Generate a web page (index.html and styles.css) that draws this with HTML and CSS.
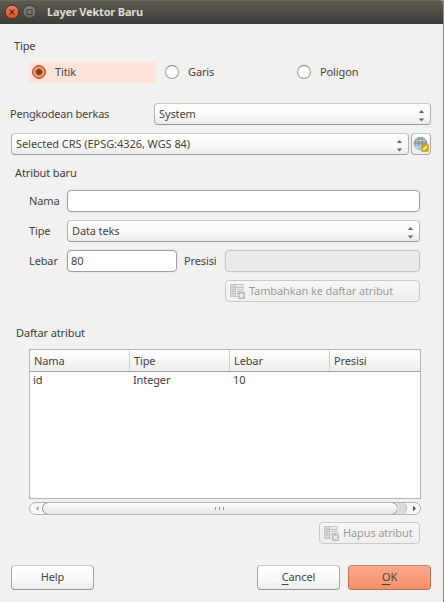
FILE: index.html
```html
<!DOCTYPE html>
<html lang="id">
<head>
<meta charset="utf-8">
<title>Layer Vektor Baru</title>
<link rel="stylesheet" href="styles.css">
</head>
<body>
<svg class="defs" aria-hidden="true">
  <symbol id="arrows" viewBox="0 0 7 13"><path d="M.8 4 3.500 1l2.700 3zM.8 9.400l2.700 3 2.700-3z" fill="#666"/></symbol>
  <symbol id="table" viewBox="0 0 15 15">
    <rect x=".5" y=".5" width="12.500" height="12" fill="#ececeb" stroke="#c6c6c5"/>
    <path d="M1 1h4v11H1z" fill="#d6d6d5"/>
    <path d="M5.500 1v11M1 3.500h12M2 5.500h2M2 7.500h2M2 9.500h2M7 5.500h5M7 7.500h5M7 9.500h3" stroke="#c2c2c1" fill="none"/>
    <rect x="8" y="8" width="7" height="7" rx="1" fill="#b9b9b8"/>
  </symbol>
</svg>
<div class="window">
  <header class="titlebar">
    <svg class="controls" viewBox="0 0 33 16" width="33" height="16">
      <defs>
        <linearGradient id="close" x2="0" y2="1"><stop stop-color="#f5825c"/><stop offset="1" stop-color="#df4a1c"/></linearGradient>
        <linearGradient id="max" x2="0" y2="1"><stop stop-color="#8a8880"/><stop offset="1" stop-color="#65635c"/></linearGradient>
      </defs>
      <circle cx="8" cy="8" r="6.800" fill="url(#close)" stroke="#35342f"/>
      <path d="m5.600 5.600 4.800 4.800m0-4.800-4.800 4.800" stroke="#47261b" stroke-width="1.200"/>
      <circle cx="25.500" cy="8" r="6.600" fill="url(#max)" stroke="#3a3934"/>
      <rect x="23" y="5.500" width="5" height="5" fill="none" stroke="#484640"/>
    </svg>
    <h1>Layer Vektor Baru</h1>
  </header>
  <main>
    <h2 class="type-title">Tipe</h2>
    <div class="radios">
      <label class="radio selected"><i class="dot"></i><span>Titik</span></label>
      <label class="radio"><i class="dot"></i><span>Garis</span></label>
      <label class="radio"><i class="dot"></i><span>Poligon</span></label>
    </div>
    <div class="row encoding">
      <span class="tight">Pengkodean berkas</span>
      <div class="combo"><span>System</span><svg class="arrows"><use href="#arrows"/></svg></div>
    </div>
    <div class="row crs">
      <div class="combo"><span class="wide">Selected CRS (EPSG:4326, WGS 84)</span><svg class="arrows"><use href="#arrows"/></svg></div>
      <button class="globe" aria-label="CRS">
        <svg viewBox="0 0 16 16" width="16" height="16">
          <circle cx="7.500" cy="7.800" r="6.800" fill="#96bce4"/>
          <path d="M.6 7.800a6.900 6.900 0 0 1 13.800 0z" fill="#8e9599"/>
          <path d="M1 7.800h13M2 4.500h11M2 11.500h11M7.500 1v13.500M4.500 2Q2.500 8 4.500 14M10.500 2q2 6 0 12" fill="none" stroke="#d5dde2" stroke-width=".6"/>
          <path d="M.6 7.800h13.800" stroke="#747c80" stroke-width=".8"/>
          <rect x="8.500" y="8.500" width="7" height="7" rx=".8" fill="#cfaa0c" stroke="#b8960c" stroke-width=".6"/>
          <path d="m10 14 .6-1.800 2.900-2.500.9.900-2.700 2.800z" fill="#fff"/>
        </svg>
      </button>
    </div>
    <h2 class="new-title">Atribut baru</h2>
    <div class="attribute">
      <span>Nama</span><div class="field name"></div>
      <span>Tipe</span><div class="combo"><span>Data teks</span><svg class="arrows"><use href="#arrows"/></svg></div>
      <span>Lebar</span>
      <div class="pair"><div class="field num">80</div><span>Presisi</span><div class="field off"></div></div>
    </div>
    <button class="disabled add"><svg width="15" height="15" viewBox="0 0 15 15"><use href="#table"/><path d="M11.500 9v5M9 11.500h5M9.800 9.800l3.400 3.400m0-3.400-3.400 3.400" stroke="#f4f4f3" stroke-width=".9"/></svg><span>Tambahkan ke daftar atribut</span></button>
    <h2 class="list-title">Daftar atribut</h2>
    <div class="table">
      <div class="thead"><span>Nama</span><span>Tipe</span><span>Lebar</span><span>Presisi</span></div>
      <div class="tr"><span>id</span><span>Integer</span><span>10</span><span></span></div>
    </div>
    <div class="scroll">
      <svg class="left" width="12" height="11" viewBox="0 0 12 11"><path d="M8.500 3v5L6 5.500z" fill="#999"/></svg>
      <div class="thumb"><i></i><i></i><i></i></div>
      <div class="rest"></div>
      <svg width="13" height="11" viewBox="0 0 13 11"><path d="M6 2.700v5.600L9 5.500z" fill="#555"/></svg>
    </div>
    <button class="disabled remove"><svg width="15" height="15" viewBox="0 0 15 15"><use href="#table"/><path d="m9.500 9.500 4 4m0-4-4 4" stroke="#f4f4f3" stroke-width="1.300"/></svg><span>Hapus atribut</span></button>
    <footer>
      <button class="push help">Help</button>
      <button class="push"><u>C</u>ancel</button>
      <button class="push ok"><u>O</u>K</button>
    </footer>
  </main>
</div>
</body>
</html>
```
FILE: styles.css
```css
* { box-sizing: border-box; }
body {
  margin: 0;
  background: #8d8b89;
  font: 11px/16px "Noto Sans", sans-serif;
  letter-spacing: -0.12px;
  color: #434343;
  white-space: nowrap;
}
.defs { display: none; }
.window {
  width: 443px;
  height: 602px;
  background: #f2f1f0;
  border-radius: 0 4px 0 0;
  overflow: hidden;
}
.titlebar {
  display: flex;
  align-items: center;
  height: 24px;
  padding: 0 0 1px 4px;
  background: linear-gradient(#5d5a50, #3d3c38);
  border-top: 1px solid #6b6759;
}
.controls { display: block; }
h1 {
  margin: 0 0 1px 10px;
  font-size: 11px;
  line-height: 16px;
  font-weight: 700;
  letter-spacing: -0.18px;
  color: #dfdbd2;
}
h2 { margin: 0; font-size: 11px; line-height: 16px; font-weight: 400; color: #3c3c3c; }
main { display: flex; flex-direction: column; padding: 0 12px 0 11px; }
button { font: inherit; letter-spacing: inherit; color: inherit; padding: 0; }

.type-title { margin: 14px 0 0 3px; }
.radios { display: grid; grid-template-columns: 133px 132px 100px; margin: 8px 0 0 18px; }
.radio { display: flex; align-items: center; width: 127px; height: 21px; padding: 0 0 1px 3px; gap: 9px; }
.radio span { padding-bottom: 1px; }
.radio.selected { background: #fee3da; }
.dot {
  width: 14px;
  height: 14px;
  border-radius: 50%;
  border: 1px solid #9b9895;
  border-top-color: #807d7a;
  background: #fff;
}
.selected .dot {
  border-color: #b5512e;
  background: radial-gradient(circle, #7b3f28 0 2.6px, #f2855c 3.4px, #f69b78 4.6px, #ec6f42 6px);
}

.row { display: flex; align-items: center; height: 22px; }
.encoding { margin-top: 20px; margin-left: -1px; }
.encoding > span { width: 144px; }
.tight { letter-spacing: -0.2px; }
.wide { letter-spacing: -0.06px; }
.crs { margin-top: 8px; gap: 2px; }
.combo {
  flex: 1;
  display: flex;
  align-items: center;
  justify-content: space-between;
  height: 22px;
  padding: 0 5px 0 4px;
  border: 1px solid #b4b0ac;
  border-top-color: #cbc4bf;
  border-bottom-color: #999693;
  border-radius: 4px;
  background: linear-gradient(#fff, #fbfbfb 50%, #ebebea);
}
.arrows { width: 7px; height: 13px; margin-top: 3px; }
.globe {
  display: flex;
  align-items: center;
  justify-content: center;
  width: 20px;
  height: 22px;
  border: 1px solid #aaa7a4;
  border-top-color: #c8c4c0;
  border-radius: 4px;
  background: linear-gradient(#fff, #ededec);
}

.new-title { margin: 10px 0 0 4px; }
.attribute {
  display: grid;
  grid-template-columns: 38px 353px;
  row-gap: 8px;
  align-items: center;
  margin: 9px 0 0 18px;
}
.field {
  height: 22px;
  padding: 2px 3px;
  border: 1px solid #a19e9b;
  border-radius: 4px;
  background: #fff;
  box-shadow: 0 0 0 1px #eceae8;
}
.pair { display: flex; align-items: center; }
.num { width: 110px; margin-right: 7px; }
.pair > span { width: 41px; }
.off { width: 195px; background: #ebeae9; border-color: #c8c6c4; }

.disabled {
  display: flex;
  align-items: center;
  align-self: flex-end;
  height: 22px;
  padding-left: 4px;
  border: 1px solid #cbc9c7;
  border-radius: 4px;
  background: linear-gradient(#f8f7f7, #efeeed);
  color: #9c9c9b;
}
.disabled span { margin-left: 4px; }
.add { width: 195px; margin: 8px 11px 0 0; }
.remove { width: 101px; margin: 7px 11px 0 0; }

.list-title { margin: 23px 0 0 5px; }
.table {
  width: 392px;
  height: 150px;
  margin: 8px 0 0 18px;
  border: 1px solid #b7b5b0;
  background: #fff;
}
.thead, .tr { display: grid; grid-template-columns: 100px 100px 100px 1fr; }
.thead { height: 22px; border-bottom: 1px solid #a5a29f; background: linear-gradient(#fff, #efeeed); }
.thead span { padding: 3px 0 0 4px; border-right: 1px solid #d0cecb; }
.thead span:last-child { border: 0; }
.tr { color: #3c3c3c; }
.tr span { padding-left: 3px; }

.scroll {
  display: flex;
  align-items: center;
  width: 392px;
  height: 13px;
  margin: 3px 0 0 18px;
  border: 1px solid #b5b3b0;
  border-radius: 7px;
  background: #f7f7f6;
  overflow: hidden;
}
.thumb {
  display: flex;
  align-items: center;
  justify-content: center;
  gap: 2px;
  width: 356px;
  height: 13px;
  margin: -1px 0;
  border: 1px solid #8f8c89;
  border-radius: 7px;
  background: linear-gradient(#fdfdfd, #e6e5e4);
  flex: none;
}
.thumb i { width: 1px; height: 3px; margin-right: 1px; background: #999; }
.rest { width: 10px; height: 13px; margin-left: -1px; border-radius: 0 6px 6px 0; background: #dddcdb; border-right: 1px solid #c0bebc; }

footer { display: flex; gap: 8px; margin-top: 21px; }
.push {
  width: 83px;
  height: 25px;
  padding-bottom: 1px;
  border: 1px solid #a9a6a3;
  border-top-color: #c9c5c1;
  border-bottom-color: #989592;
  border-radius: 4px;
  background: linear-gradient(#fff, #fafafa 55%, #ececeb);
}
.help { margin-right: auto; }
.push u { text-underline-offset: 3px; text-decoration-skip-ink: none; }
.ok { border-color: #b77358; border-top-color: #c08c76; background: linear-gradient(#fba88a, #f5906b); }
```
